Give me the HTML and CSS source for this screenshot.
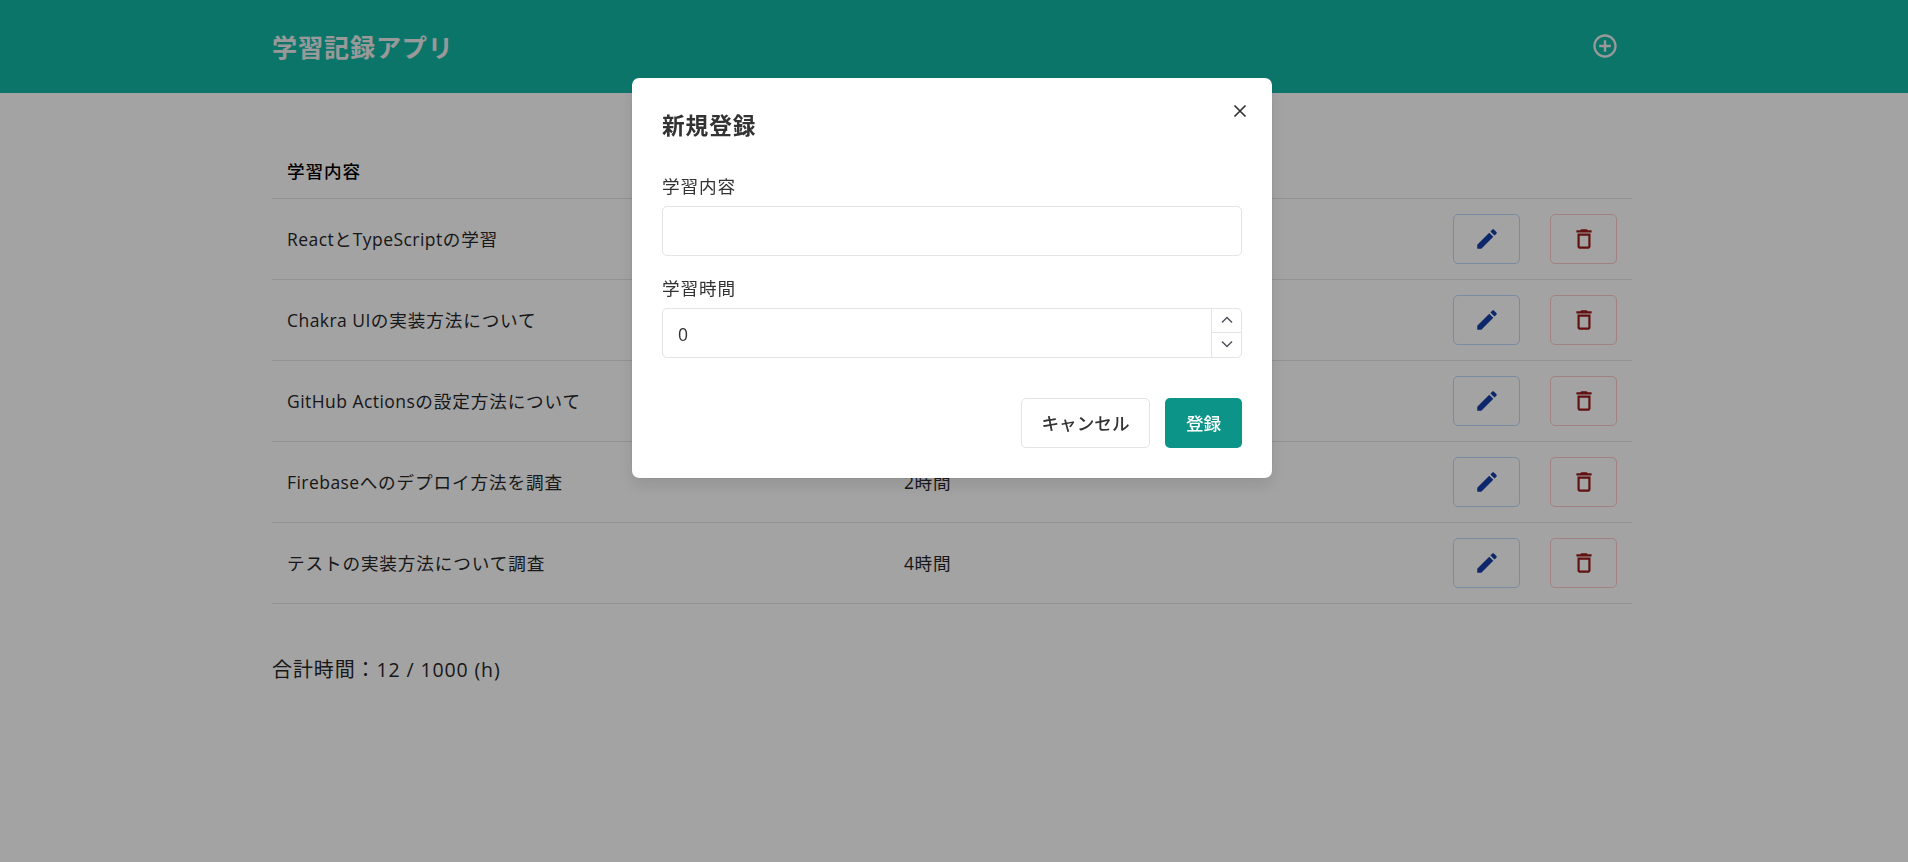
FILE: index.html
```
<!DOCTYPE html>
<html lang="ja">
<head>
  <meta charset="UTF-8">
  <meta name="viewport" content="width=device-width, initial-scale=1.0">
  <title>学習記録アプリ</title>
  <link rel="stylesheet" href="styles.css">
</head>
<body>
  <!-- アイコン定義 -->
  <svg class="icon-defs" width="0" height="0">
    <symbol id="icon-add" viewBox="0 0 24 24">
      <path d="M13 7h-2v4H7v2h4v4h2v-4h4v-2h-4V7zm-1-5C6.48 2 2 6.48 2 12s4.48 10 10 10 10-4.48 10-10S17.52 2 12 2zm0 18c-4.41 0-8-3.59-8-8s3.59-8 8-8 8 3.59 8 8-3.59 8-8 8z"/>
    </symbol>
    <symbol id="icon-edit" viewBox="0 0 24 24">
      <path d="M3 17.25V21h3.75L17.81 9.94l-3.75-3.75L3 17.25zM20.71 7.04c.39-.39.39-1.02 0-1.41l-2.34-2.34c-.39-.39-1.02-.39-1.41 0l-1.83 1.83 3.75 3.75 1.83-1.83z"/>
    </symbol>
    <symbol id="icon-delete" viewBox="0 0 24 24">
      <path d="M6 19c0 1.1.9 2 2 2h8c1.1 0 2-.9 2-2V7H6v12zM8 9h8v10H8V9zm7.5-5l-1-1h-5l-1 1H5v2h14V4z"/>
    </symbol>
  </svg>

  <header class="header">
    <div class="header-inner">
      <h1 class="app-title">学習記録アプリ</h1>
      <button class="add-button" aria-label="新規登録"><svg class="icon-add"><use href="#icon-add"/></svg></button>
    </div>
  </header>

  <main class="container">
    <table class="records">
      <thead>
        <tr><th class="col-title">学習内容</th><th>学習時間</th><th></th></tr>
      </thead>
      <tbody>
        <tr>
          <td><span class="latin">React</span>と<span class="latin">TypeScript</span>の学習</td>
          <td><span class="latin">3</span>時間</td>
          <td>
            <div class="actions">
              <button class="icon-button edit" aria-label="編集"><svg><use href="#icon-edit"/></svg></button>
              <button class="icon-button delete" aria-label="削除"><svg><use href="#icon-delete"/></svg></button>
            </div>
          </td>
        </tr>
        <tr>
          <td><span class="latin">Chakra UI</span>の実装方法について</td>
          <td><span class="latin">2</span>時間</td>
          <td>
            <div class="actions">
              <button class="icon-button edit" aria-label="編集"><svg><use href="#icon-edit"/></svg></button>
              <button class="icon-button delete" aria-label="削除"><svg><use href="#icon-delete"/></svg></button>
            </div>
          </td>
        </tr>
        <tr>
          <td><span class="latin">GitHub Actions</span>の設定方法について</td>
          <td><span class="latin">1</span>時間</td>
          <td>
            <div class="actions">
              <button class="icon-button edit" aria-label="編集"><svg><use href="#icon-edit"/></svg></button>
              <button class="icon-button delete" aria-label="削除"><svg><use href="#icon-delete"/></svg></button>
            </div>
          </td>
        </tr>
        <tr>
          <td><span class="latin">Firebase</span>へのデプロイ方法を調査</td>
          <td><span class="latin">2</span>時間</td>
          <td>
            <div class="actions">
              <button class="icon-button edit" aria-label="編集"><svg><use href="#icon-edit"/></svg></button>
              <button class="icon-button delete" aria-label="削除"><svg><use href="#icon-delete"/></svg></button>
            </div>
          </td>
        </tr>
        <tr>
          <td>テストの実装方法について調査</td>
          <td><span class="latin">4</span>時間</td>
          <td>
            <div class="actions">
              <button class="icon-button edit" aria-label="編集"><svg><use href="#icon-edit"/></svg></button>
              <button class="icon-button delete" aria-label="削除"><svg><use href="#icon-delete"/></svg></button>
            </div>
          </td>
        </tr>
      </tbody>
    </table>
    <p class="total">合計時間：<span class="latin">12 / 1000 (h)</span></p>
  </main>

  <!-- 新規登録モーダル -->
  <div class="overlay">
    <form class="modal">
      <button type="button" class="close" aria-label="閉じる">
        <svg width="14" height="14" viewBox="0 0 14 14"><path d="M1.5 1.5l11 11M12.5 1.5l-11 11"/></svg>
      </button>
      <h2 class="modal-title">新規登録</h2>
      <label class="label" for="title">学習内容</label>
      <input class="input" type="text" id="title">
      <label class="label" for="time">学習時間</label>
      <div class="number-input">
        <input class="number-field" type="text" id="time" value="0">
        <div class="stepper">
          <button type="button" aria-label="増やす"><svg width="12" height="8" viewBox="0 0 12 8"><path d="M1 6.5l5-5 5 5"/></svg></button>
          <button type="button" aria-label="減らす"><svg width="12" height="8" viewBox="0 0 12 8"><path d="M1 1.5l5 5 5-5"/></svg></button>
        </div>
      </div>
      <div class="modal-footer">
        <button type="button" class="button cancel">キャンセル</button>
        <button type="button" class="button submit">登録</button>
      </div>
    </form>
  </div>
</body>
</html>
```
FILE: styles.css
```
* {
  box-sizing: border-box;
}

body {
  margin: 0;
  font-family: "Noto Sans CJK JP", sans-serif;
  font-size: 17.6px;
  line-height: 26px;
  letter-spacing: 0.88px;
  color: #27272a;
  background-color: #fff;
  overflow: hidden;
}

h1, h2, p {
  margin: 0;
}

button, input {
  font: inherit;
  color: inherit;
  margin: 0;
  padding: 0;
  border: 0;
  background: none;
}

button {
  display: flex;
  align-items: center;
  justify-content: center;
  cursor: pointer;
}

.icon-defs {
  display: none;
}

.latin {
  font-family: "Open Sans", "Noto Sans", sans-serif;
  font-size: 17.5px;
  letter-spacing: 0.45px;
}

.header {
  height: 93px;
  padding-right: 4px;
  background-color: #14b8a6;
  color: #f0f0f0;
}

.header-inner {
  display: flex;
  align-items: center;
  justify-content: space-between;
  width: 1360px;
  height: 100%;
  margin: 0 auto;
  padding: 0 13px 2px 0;
}

.app-title {
  font-size: 25.1px;
  line-height: 36px;
  font-weight: 700;
}

.icon-add {
  width: 28px;
  height: 28px;
  fill: currentColor;
}

.container {
  width: 1364px;
  margin: 0 auto;
  padding: 52px 4px 0 0;
}

.records {
  width: 100%;
  border-collapse: separate;
  border-spacing: 0;
  table-layout: fixed;
}

.records th, .records td {
  padding: 0 15px;
  text-align: left;
  border-bottom: 1px solid #e4e4e7;
}

.records th {
  height: 54px;
  padding-bottom: 2px;
  font-weight: 500;
  color: #000;
}

.records td {
  height: 81px;
}

.col-title {
  width: 617px;
}

.actions {
  display: flex;
  justify-content: flex-end;
  gap: 30px;
}

.icon-button {
  width: 67px;
  height: 50px;
  border: 1px solid;
  border-radius: 5px;
}

.icon-button svg {
  width: 26px;
  height: 26px;
  fill: currentColor;
}

.edit {
  color: #173da6;
  border-color: #bfdbfe;
}

.delete {
  color: #991919;
  border-color: #fecaca;
}

.total {
  margin-top: 52px;
  font-size: 20px;
}

.total .latin {
  font-size: 19.5px;
  letter-spacing: 0.88px;
}

/* モーダル */
.overlay {
  position: fixed;
  inset: 0;
  padding: 78px 4px 0 0;
  background-color: rgba(0, 0, 0, 0.36);
}

.modal {
  position: relative;
  width: 640px;
  height: 400px;
  margin: 0 auto;
  padding: 33px 30px 30px;
  border-radius: 7px;
  background-color: #fff;
  color: #333;
  box-shadow: 0 8px 16px rgba(24, 24, 27, 0.1), 0 0 1px rgba(24, 24, 27, 0.3);
}

.close {
  position: absolute;
  top: 26px;
  right: 25px;
}

.modal svg path {
  fill: none;
  stroke: currentColor;
  stroke-width: 1.7;
}

.modal-title {
  margin-bottom: 36px;
  font-size: 22.7px;
  line-height: 28px;
  font-weight: 700;
}

.label {
  display: block;
  height: 31px;
  line-height: 22px;
}

.input {
  display: block;
  width: 100%;
  height: 50px;
  margin-bottom: 21px;
  padding: 0 15px;
  border: 1px solid #e4e4e7;
  border-radius: 5px;
}

.number-input {
  display: flex;
  height: 50px;
  border: 1px solid #e4e4e7;
  border-radius: 5px;
}

.number-field {
  flex: 1;
  padding: 2px 15px 0;
  font-family: "Open Sans", "Noto Sans", sans-serif;
  font-size: 17.5px;
}

.stepper {
  display: flex;
  flex-direction: column;
  width: 30px;
  border-left: 1px solid #e4e4e7;
  color: #52525b;
}

.stepper svg path {
  stroke-width: 1.5;
}

.stepper button {
  flex: 1;
}

.stepper button + button {
  padding-bottom: 2px;
  border-top: 1px solid #e4e4e7;
}

.modal-footer {
  display: flex;
  justify-content: flex-end;
  gap: 15px;
  margin-top: 40px;
}

.button {
  height: 50px;
  border-radius: 5px;
  font-weight: 500;
  letter-spacing: 0;
}

.cancel {
  width: 129px;
  border: 1px solid #e4e4e7;
}

.submit {
  width: 77px;
  color: #fff;
  background-color: #0d9488;
}
```
